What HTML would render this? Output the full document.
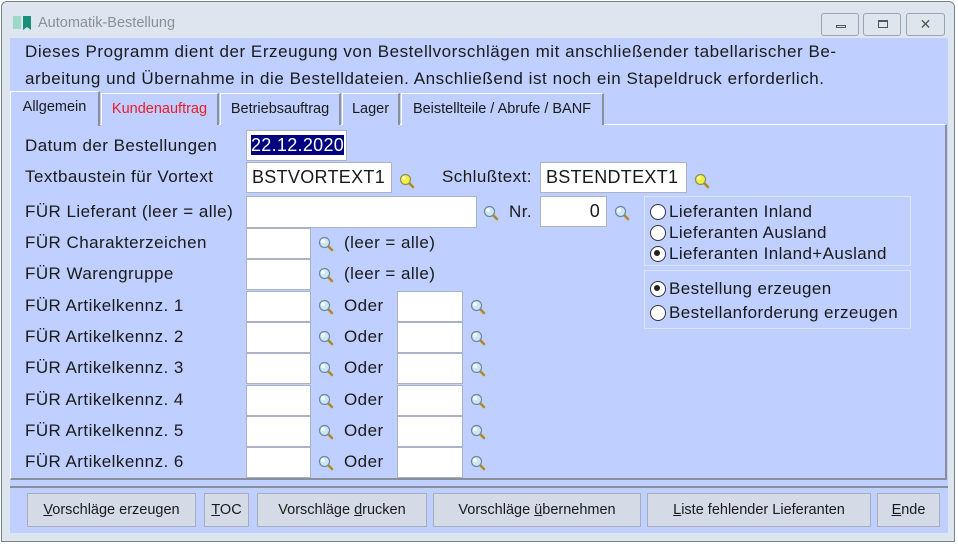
<!DOCTYPE html>
<html><head><meta charset="utf-8"><style>
*{margin:0;padding:0;box-sizing:border-box}
body{width:958px;height:544px;background:#fff;font-family:"Liberation Sans",Arial,sans-serif;position:relative;overflow:hidden;color:#1a1a1a}
.a{position:absolute}
.win{left:1px;top:1px;width:954px;height:541px;background:#dde5ee;border:1px solid #7a8290;border-radius:6px 6px 0 0}
.blue{left:10px;top:38px;width:938px;height:495px;background:#bfcfff}
.lbl{font-size:17px;letter-spacing:.45px;white-space:nowrap;line-height:20px}
.inp{background:#fff;border:1px solid #a9b3c4;font-size:18px;letter-spacing:.3px;line-height:28px;padding-left:5px}
.tab{top:93px;height:32px;background:#bfcfff;border:1px solid #fff;border-right:2px solid #8a8f99;border-bottom:none;font-size:14.5px;line-height:30px;text-align:center;white-space:nowrap}
.btn{top:493px;height:34px;background:#d5dbe6;border:1px solid #a8aeb8;font-size:14.5px;line-height:32px;text-align:center;white-space:nowrap}
.grp{border:1px solid #dde3f0}
.a.rb{font-size:17px;letter-spacing:.4px;line-height:21px;white-space:nowrap;padding-left:24px}
.rb:before{content:"";position:absolute;left:5px;top:3px;width:14px;height:14px;border:1px solid #333;border-radius:50%;background:#fff}
.rb.on:after{content:"";position:absolute;left:9px;top:7px;width:6px;height:6px;border-radius:50%;background:#222}
.wb{top:13px;height:23px;border:1px solid #9aa3b0;border-radius:3px;background:#dfe5ec}
</style></head><body>
<svg width="0" height="0" style="position:absolute"><defs>
<g id="mg"><line x1="9" y1="9" x2="14" y2="14" stroke="#b08a20" stroke-width="2.6" stroke-linecap="round"/><circle cx="6.5" cy="6.5" r="5" fill="#cfe6f2" stroke="#6a8aa0" stroke-width="1.2"/><circle cx="5" cy="5" r="2" fill="#fff" opacity=".8"/></g>
<g id="my"><line x1="9" y1="9" x2="14" y2="14" stroke="#b08a20" stroke-width="2.6" stroke-linecap="round"/><circle cx="6.5" cy="6.5" r="5" fill="#f0f040" stroke="#8a9060" stroke-width="1.2"/><circle cx="5" cy="5" r="1.8" fill="#fff" opacity=".6"/></g>
</defs></svg>
<div class="a win"></div>
<svg class="a" style="left:13px;top:15px" width="20" height="16"><rect x="0" y="1" width="8" height="13" fill="#9fd8c8"/><path d="M10 1h8v14l-4-3-4 3z" fill="#1a8f78"/></svg>
<div class="a" style="left:38px;top:15px;font-size:14.5px;color:#8a8f96">Automatik-Bestellung</div>
<div class="a wb" style="left:821px;width:38px"><div class="a" style="left:14px;top:11px;width:10px;height:3px;border:1px solid #555"></div></div>
<div class="a wb" style="left:863px;width:38px"><div class="a" style="left:14px;top:6px;width:10px;height:8px;border:1px solid #555;border-top-width:2px"></div></div>
<div class="a wb" style="left:906px;width:39px;text-align:center;font-size:14px;line-height:20px;color:#555">✕</div>
<div class="a blue"></div>
<div class="a lbl" style="left:25px;top:38px;line-height:27px;letter-spacing:.55px">Dieses Programm dient der Erzeugung von Bestellvorschlägen mit anschließender tabellarischer Be-<br>arbeitung und Übernahme in die Bestelldateien. Anschließend ist noch ein Stapeldruck erforderlich.</div>
<div class="a" style="left:10px;top:124px;width:937px;height:356px;border:1px solid #fff;border-right:2px solid #8a8f99;border-bottom:2px solid #8a8f99"></div>
<div class="a tab" style="left:10px;top:91px;height:35px;width:90px">Allgemein</div>
<div class="a tab" style="left:101px;width:118px;color:#ee1a2a">Kundenauftrag</div>
<div class="a tab" style="left:220px;width:121px">Betriebsauftrag</div>
<div class="a tab" style="left:342px;width:58px">Lager</div>
<div class="a tab" style="left:401px;width:203px">Beistellteile / Abrufe / BANF</div>

<div class="a lbl" style="left:25px;top:136px">Datum der Bestellungen</div>
<div class="a inp" style="left:246px;top:130px;width:101px;height:31px;padding-left:4px"><span style="background:#000080;color:#fff;line-height:20px;display:inline-block;margin-top:3px">22.12.2020</span></div>
<div class="a lbl" style="left:25px;top:167px">Textbaustein für Vortext</div>
<div class="a inp" style="left:246px;top:162px;width:146px;height:31px">BSTVORTEXT1</div>
<svg class="a" style="left:399px;top:173px" width="16" height="16"><use href="#my"/></svg>
<div class="a lbl" style="left:442px;top:167px">Schlußtext:</div>
<div class="a inp" style="left:540px;top:162px;width:147px;height:31px">BSTENDTEXT1</div>
<svg class="a" style="left:694px;top:173px" width="16" height="16"><use href="#my"/></svg>

<div class="a lbl" style="left:25px;top:202px">FÜR Lieferant (leer = alle)</div>
<div class="a inp" style="left:246px;top:196px;width:231px;height:32px"></div>
<svg class="a" style="left:483px;top:205px" width="16" height="16"><use href="#mg"/></svg>
<div class="a lbl" style="left:509px;top:202px">Nr.</div>
<div class="a inp" style="left:540px;top:196px;width:67px;height:31px;text-align:right;padding-right:6px">0</div>
<svg class="a" style="left:614px;top:205px" width="16" height="16"><use href="#mg"/></svg>

<div class="a grp" style="left:644px;top:196px;width:267px;height:70px"></div>
<div class="a rb" style="left:645px;top:201px">Lieferanten Inland</div>
<div class="a rb" style="left:645px;top:222px">Lieferanten Ausland</div>
<div class="a rb on" style="left:645px;top:243px">Lieferanten Inland+Ausland</div>
<div class="a grp" style="left:644px;top:270px;width:267px;height:59px"></div>
<div class="a rb on" style="left:645px;top:278px">Bestellung erzeugen</div>
<div class="a rb" style="left:645px;top:302px">Bestellanforderung erzeugen</div>

<div class="a lbl" style="left:25px;top:233px">FÜR Charakterzeichen</div>
<div class="a inp" style="left:246px;top:228px;width:65px;height:31px"></div>
<svg class="a" style="left:318px;top:236px" width="16" height="16"><use href="#mg"/></svg>
<div class="a lbl" style="left:344px;top:233px">(leer = alle)</div>
<div class="a lbl" style="left:25px;top:264px">FÜR Warengruppe</div>
<div class="a inp" style="left:246px;top:259px;width:65px;height:31px"></div>
<svg class="a" style="left:318px;top:267px" width="16" height="16"><use href="#mg"/></svg>
<div class="a lbl" style="left:344px;top:264px">(leer = alle)</div>

<div class="a lbl" style="left:25px;top:296px">FÜR Artikelkennz. 1</div>
<div class="a inp" style="left:246px;top:291px;width:65px;height:31px"></div>
<svg class="a" style="left:318px;top:299px" width="16" height="16"><use href="#mg"/></svg>
<div class="a lbl" style="left:344px;top:296px">Oder</div>
<div class="a inp" style="left:397px;top:291px;width:66px;height:31px"></div>
<svg class="a" style="left:470px;top:299px" width="16" height="16"><use href="#mg"/></svg>

<div class="a lbl" style="left:25px;top:327px">FÜR Artikelkennz. 2</div>
<div class="a inp" style="left:246px;top:322px;width:65px;height:31px"></div>
<svg class="a" style="left:318px;top:330px" width="16" height="16"><use href="#mg"/></svg>
<div class="a lbl" style="left:344px;top:327px">Oder</div>
<div class="a inp" style="left:397px;top:322px;width:66px;height:31px"></div>
<svg class="a" style="left:470px;top:330px" width="16" height="16"><use href="#mg"/></svg>

<div class="a lbl" style="left:25px;top:358px">FÜR Artikelkennz. 3</div>
<div class="a inp" style="left:246px;top:353px;width:65px;height:31px"></div>
<svg class="a" style="left:318px;top:361px" width="16" height="16"><use href="#mg"/></svg>
<div class="a lbl" style="left:344px;top:358px">Oder</div>
<div class="a inp" style="left:397px;top:353px;width:66px;height:31px"></div>
<svg class="a" style="left:470px;top:361px" width="16" height="16"><use href="#mg"/></svg>

<div class="a lbl" style="left:25px;top:390px">FÜR Artikelkennz. 4</div>
<div class="a inp" style="left:246px;top:385px;width:65px;height:31px"></div>
<svg class="a" style="left:318px;top:393px" width="16" height="16"><use href="#mg"/></svg>
<div class="a lbl" style="left:344px;top:390px">Oder</div>
<div class="a inp" style="left:397px;top:385px;width:66px;height:31px"></div>
<svg class="a" style="left:470px;top:393px" width="16" height="16"><use href="#mg"/></svg>

<div class="a lbl" style="left:25px;top:421px">FÜR Artikelkennz. 5</div>
<div class="a inp" style="left:246px;top:416px;width:65px;height:31px"></div>
<svg class="a" style="left:318px;top:424px" width="16" height="16"><use href="#mg"/></svg>
<div class="a lbl" style="left:344px;top:421px">Oder</div>
<div class="a inp" style="left:397px;top:416px;width:66px;height:31px"></div>
<svg class="a" style="left:470px;top:424px" width="16" height="16"><use href="#mg"/></svg>

<div class="a lbl" style="left:25px;top:452px">FÜR Artikelkennz. 6</div>
<div class="a inp" style="left:246px;top:447px;width:65px;height:31px"></div>
<svg class="a" style="left:318px;top:455px" width="16" height="16"><use href="#mg"/></svg>
<div class="a lbl" style="left:344px;top:452px">Oder</div>
<div class="a inp" style="left:397px;top:447px;width:66px;height:31px"></div>
<svg class="a" style="left:470px;top:455px" width="16" height="16"><use href="#mg"/></svg>

<div class="a" style="left:10px;top:486px;width:938px;height:2px;background:#8a8f99"></div>
<div class="a btn" style="left:27px;width:169px"><u>V</u>orschläge erzeugen</div>
<div class="a btn" style="left:204px;width:45px"><u>T</u>OC</div>
<div class="a btn" style="left:257px;width:170px">Vorschläge <u>d</u>rucken</div>
<div class="a btn" style="left:433px;width:208px">Vorschläge <u>ü</u>bernehmen</div>
<div class="a btn" style="left:647px;width:224px"><u>L</u>iste fehlender Lieferanten</div>
<div class="a btn" style="left:877px;width:63px"><u>E</u>nde</div>
</body></html>
